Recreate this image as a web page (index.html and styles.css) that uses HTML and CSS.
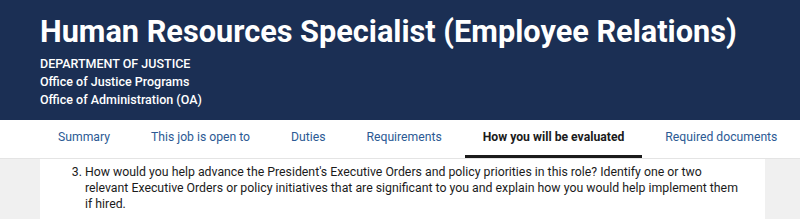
FILE: index.html
```html
<!DOCTYPE html>
<html>
  <head>
    <title>Human Resources Specialist (Employee Relations)</title>
    <link rel="stylesheet" href="styles.css">
  </head>
  <body>
    <header class="job-header">
      <h1 class="job-title">Human Resources Specialist (Employee Relations)</h1>
      <div class="agency-name">DEPARTMENT OF JUSTICE</div>
      <div class="agency-line">Office of Justice Programs</div>
      <div class="agency-line">Office of Administration (OA)</div>
    </header>

    <nav class="tabs">
      <a class="tab">Summary</a>
      <a class="tab">This job is open to</a>
      <a class="tab">Duties</a>
      <a class="tab">Requirements</a>
      <a class="tab tab-active">How you will be evaluated</a>
      <a class="tab">Required documents</a>
    </nav>

    <div class="page">
      <div class="content">
        <ol class="questions" start="3">
          <li>How would you help advance the President's Executive Orders and policy priorities in this role? Identify one or two relevant Executive Orders or policy initiatives that are significant to you and explain how you would help implement them if hired.</li>
        </ol>
      </div>
    </div>
  </body>
</html>
```

FILE: styles.css
```css
body {
  margin: 0;
  font-family: Roboto, "Liberation Sans", sans-serif;
  background-color: #f0f0f0;
  color: #1b1b1b;
  overflow: hidden;
}

.job-header {
  background-color: #1b2f54;
  color: white;
  padding: 12px 40px 0 40px;
  height: 108px;
}

.job-title {
  margin: 0 0 3px 0;
  font-size: 30.7px;
  font-weight: 700;
  line-height: 40px;
}

.agency-name,
.agency-line {
  font-size: 12.5px;
  font-weight: 500;
  line-height: 18px;
}

.tabs {
  display: flex;
  gap: 5px;
  height: 38px;
  padding-left: 40px;
  background-color: white;
  border-bottom: 1px solid #e4e4e4;
}

.tab {
  flex-shrink: 0;
  white-space: nowrap;
  padding: 0 18px;
  font-size: 12.2px;
  line-height: 35px;
  color: #2c5a94;
  border-bottom: 3px solid transparent;
}

.tab-active {
  color: #1b1b1b;
  font-weight: 700;
  border-bottom-color: #1b1b1b;
}

.page {
  padding: 0 35px 0 40px;
}

.content {
  background-color: white;
  padding: 5px 0 20px 0;
}

.questions {
  margin: 0;
  padding-left: 45px;
  padding-right: 18px;
  font-size: 12.3px;
  line-height: 16px;
}
```
